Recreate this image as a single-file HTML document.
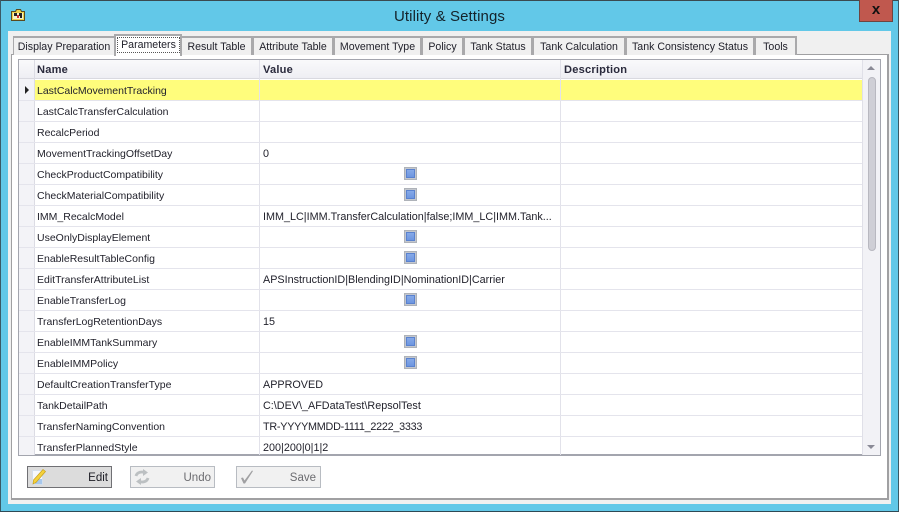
<!DOCTYPE html>
<html><head><meta charset="utf-8"><style>
html,body{margin:0;padding:0;width:899px;height:512px;overflow:hidden;background:#62c8e8}
*{box-sizing:border-box}
#w{position:relative;width:899px;height:512px;font-family:"Liberation Sans",sans-serif;font-size:10.5px;color:#22222c;overflow:hidden;filter:blur(.3px)}
.a{position:absolute}
.tab{position:absolute;top:36px;height:19px;background:#f0f0f0;border:2px solid #a9a9ab;border-bottom:none;border-left-width:1px;text-align:center;line-height:18px;white-space:nowrap;font-size:10.6px}
.l{position:absolute;left:19px;width:843px;height:1px;background:#e4e4ec}
.n{position:absolute;left:37px;white-space:nowrap;line-height:16px;margin-top:1px}
.v{position:absolute;left:263px;white-space:nowrap;line-height:16px;font-size:10.8px;margin-top:1px}
.h{font-weight:bold;font-size:11.1px;letter-spacing:.2px;color:#2a2a3c}
.c{position:absolute;left:404px;width:13px;height:13px;margin-top:1px;background:#c3c7ce;border:1px solid #aeb2b9;padding:1px}
.c i{display:block;width:9px;height:9px;background:linear-gradient(#86a9e8,#6d96e0);border:1px solid #5a82cf}
.b{position:absolute;top:466px;height:22px;border:1px solid #b8bcc2;background:#f1f1f1;text-align:right;line-height:22px;padding-right:3px;font-size:11.5px;color:#6c6c70}
</style></head><body><div id="w">
<div class="a" style="left:0;top:0;width:899px;height:1px;background:#3a4a50"></div>
<div class="a" style="left:0;top:0;width:1px;height:512px;background:#3a5a66"></div>
<div class="a" style="right:0;top:0;width:1px;height:512px;background:#3a5a66"></div>
<div class="a" style="left:0;top:511px;width:899px;height:1px;background:#2f4a55"></div>

<svg class="a" style="left:11px;top:9px" width="14" height="12" viewBox="0 0 14 12">
<path d="M.5 2.500h4l1-2h4l1 2h3v9H.5z" fill="#ecd24c" stroke="#5a4a20" stroke-width="1"/>
<rect x="2" y="4" width="10" height="6" fill="#f6f2c8"/>
<rect x="3" y="4" width="3" height="3" fill="#222"/><rect x="8" y="4" width="3" height="3" fill="#222"/><rect x="6" y="6" width="2" height="3" fill="#c33"/><rect x="9" y="7" width="2" height="2" fill="#222"/>
</svg>
<div class="a" style="left:0;width:899px;top:8px;text-align:center;font-size:15px;line-height:18px;letter-spacing:.1px;color:#14222a">Utility &amp; Settings</div>
<div class="a" style="left:859px;top:0;width:34px;height:22px;background:#c0584e;border:1px solid #6e4440;border-top:none;text-align:center;color:#111;font-weight:bold;font-size:15px;line-height:20px">x</div>

<div class="a" style="left:8px;top:31px;width:883px;height:473px;background:#f0f0f0"></div>
<div class="a" style="left:11px;top:54px;width:878px;height:446px;background:#fff;border:1px solid #a0a0a2;border-width:1px 2px 2px 1px"></div>

<div class="tab" style="left:13px;width:103px">Display Preparation</div>
<div class="tab" style="left:181px;width:72px">Result Table</div>
<div class="tab" style="left:253px;width:81px">Attribute Table</div>
<div class="tab" style="left:334px;width:88px">Movement Type</div>
<div class="tab" style="left:422px;width:42px">Policy</div>
<div class="tab" style="left:464px;width:69px">Tank Status</div>
<div class="tab" style="left:533px;width:93px">Tank Calculation</div>
<div class="tab" style="left:626px;width:129px">Tank Consistency Status</div>
<div class="tab" style="left:755px;width:42px">Tools</div>
<div class="a" style="left:114px;top:34px;width:68px;height:22px;background:#fff;border:2px solid #a9a9ab;border-bottom:none;z-index:2"></div>
<div class="a" style="left:117px;top:37px;width:63px;height:16px;border:1px dotted #555;text-align:center;line-height:14px;font-size:10.6px;z-index:3">Parameters</div>

<div class="a" style="left:18px;top:59px;width:863px;height:397px;background:#fff;border:1px solid #a3a5ae;border-width:1px 1px 2px 1px"></div>
<div class="a" style="left:19px;top:60px;width:843px;height:19px;background:linear-gradient(#f9f9fb,#eeeef3);border-bottom:1px solid #d9d9e0"></div>
<div class="a" style="left:19px;top:79px;width:16px;height:376px;background:#f3f3f7"></div>
<div class="a" style="left:35px;top:80px;width:827px;height:20px;background:#fffd7c"></div>
<div class="a" style="left:34px;top:60px;width:1px;height:395px;background:#dcdce4"></div>
<div class="a" style="left:259px;top:60px;width:1px;height:395px;background:#e2e2ea"></div>
<div class="a" style="left:560px;top:60px;width:1px;height:395px;background:#e2e2ea"></div>
<div class="a" style="left:862px;top:60px;width:1px;height:395px;background:#e0e0e8"></div>
<div class="a" style="left:863px;top:60px;width:17px;height:395px;background:#f2f2f6"></div>
<div class="a" style="left:868px;top:77px;width:8px;height:174px;background:#cfcfd6;border:1px solid #b8b8c0;border-radius:4px"></div>
<div class="a" style="left:867px;top:66px;width:0;height:0;border:4px solid transparent;border-top:none;border-bottom:4px solid #8a8a96"></div>
<div class="a" style="left:867px;top:445px;width:0;height:0;border:4px solid transparent;border-bottom:none;border-top:4px solid #8a8a96"></div>
<div class="a" style="left:25px;top:86px;width:0;height:0;border:4px solid transparent;border-right:none;border-left:4px solid #222"></div>

<div class="l" style="top:100px"></div><div class="l" style="top:121px"></div><div class="l" style="top:142px"></div><div class="l" style="top:163px"></div><div class="l" style="top:184px"></div><div class="l" style="top:205px"></div><div class="l" style="top:226px"></div><div class="l" style="top:247px"></div><div class="l" style="top:268px"></div><div class="l" style="top:289px"></div><div class="l" style="top:310px"></div><div class="l" style="top:331px"></div><div class="l" style="top:352px"></div><div class="l" style="top:373px"></div><div class="l" style="top:394px"></div><div class="l" style="top:415px"></div><div class="l" style="top:436px"></div>

<div class="n h" style="top:61px">Name</div>
<div class="v h" style="top:61px">Value</div>
<div class="a h" style="left:564px;top:62px;line-height:16px">Description</div>

<div class="n" style="top:82px">LastCalcMovementTracking</div>
<div class="n" style="top:103px">LastCalcTransferCalculation</div>
<div class="n" style="top:124px">RecalcPeriod</div>
<div class="n" style="top:145px">MovementTrackingOffsetDay</div><div class="v" style="top:145px">0</div>
<div class="n" style="top:166px">CheckProductCompatibility</div><div class="c" style="top:166px"><i></i></div>
<div class="n" style="top:187px">CheckMaterialCompatibility</div><div class="c" style="top:187px"><i></i></div>
<div class="n" style="top:208px">IMM_RecalcModel</div><div class="v" style="top:208px">IMM_LC|IMM.TransferCalculation|false;IMM_LC|IMM.Tank...</div>
<div class="n" style="top:229px">UseOnlyDisplayElement</div><div class="c" style="top:229px"><i></i></div>
<div class="n" style="top:250px">EnableResultTableConfig</div><div class="c" style="top:250px"><i></i></div>
<div class="n" style="top:271px">EditTransferAttributeList</div><div class="v" style="top:271px">APSInstructionID|BlendingID|NominationID|Carrier</div>
<div class="n" style="top:292px">EnableTransferLog</div><div class="c" style="top:292px"><i></i></div>
<div class="n" style="top:313px">TransferLogRetentionDays</div><div class="v" style="top:313px">15</div>
<div class="n" style="top:334px">EnableIMMTankSummary</div><div class="c" style="top:334px"><i></i></div>
<div class="n" style="top:355px">EnableIMMPolicy</div><div class="c" style="top:355px"><i></i></div>
<div class="n" style="top:376px">DefaultCreationTransferType</div><div class="v" style="top:376px">APPROVED</div>
<div class="n" style="top:397px">TankDetailPath</div><div class="v" style="top:397px">C:\DEV\_AFDataTest\RepsolTest</div>
<div class="n" style="top:418px">TransferNamingConvention</div><div class="v" style="top:418px;letter-spacing:-.25px">TR-YYYYMMDD-1111_2222_3333</div>
<div class="n" style="top:439px">TransferPlannedStyle</div><div class="v" style="top:439px">200|200|0|1|2</div>

<div class="b" style="left:27px;width:85px;background:#dcdcdc;border:1px solid #707074;color:#1c1c24;padding-right:3px">Edit</div>
<svg class="a" style="left:30px;top:468px" width="18" height="18" viewBox="0 0 18 18">
<path d="M2.500 2.500h10v14h-10z" fill="#f6f8fc" stroke="#d4dfec"/><path d="M5 11h7v5H5z" fill="#a8c8ec"/>
<path d="M3.500 12L13 1.500l2.500 2L6 14.500l-3 1.500z" fill="#f4d23c" stroke="#c8a020" stroke-width=".7"/>
</svg>
<div class="b" style="left:130px;width:85px">Undo</div>
<svg class="a" style="left:134px;top:469px" width="16" height="16" viewBox="0 0 16 16" fill="none" stroke="#bcc0c2" stroke-width="2.800">
<path d="M2 7C3 3 8 2 12 4"/><path d="M14 9C13 13 8 14 4 12"/><path d="M9 0l5 3.500-5 3.500z" fill="#bcc0c2" stroke="none"/><path d="M7 9l-5 3.500 5 3.500z" fill="#bcc0c2" stroke="none"/>
</svg>
<div class="b" style="left:236px;width:85px;padding-right:4px">Save</div>
<svg class="a" style="left:240px;top:469px" width="14" height="16" viewBox="0 0 14 16">
<path d="M1 9L3 8.500 4.500 11.500 12 1.500 13 2 5 14.500H3.500z" fill="#a0a0a2"/>
</svg>
</div></body></html>
